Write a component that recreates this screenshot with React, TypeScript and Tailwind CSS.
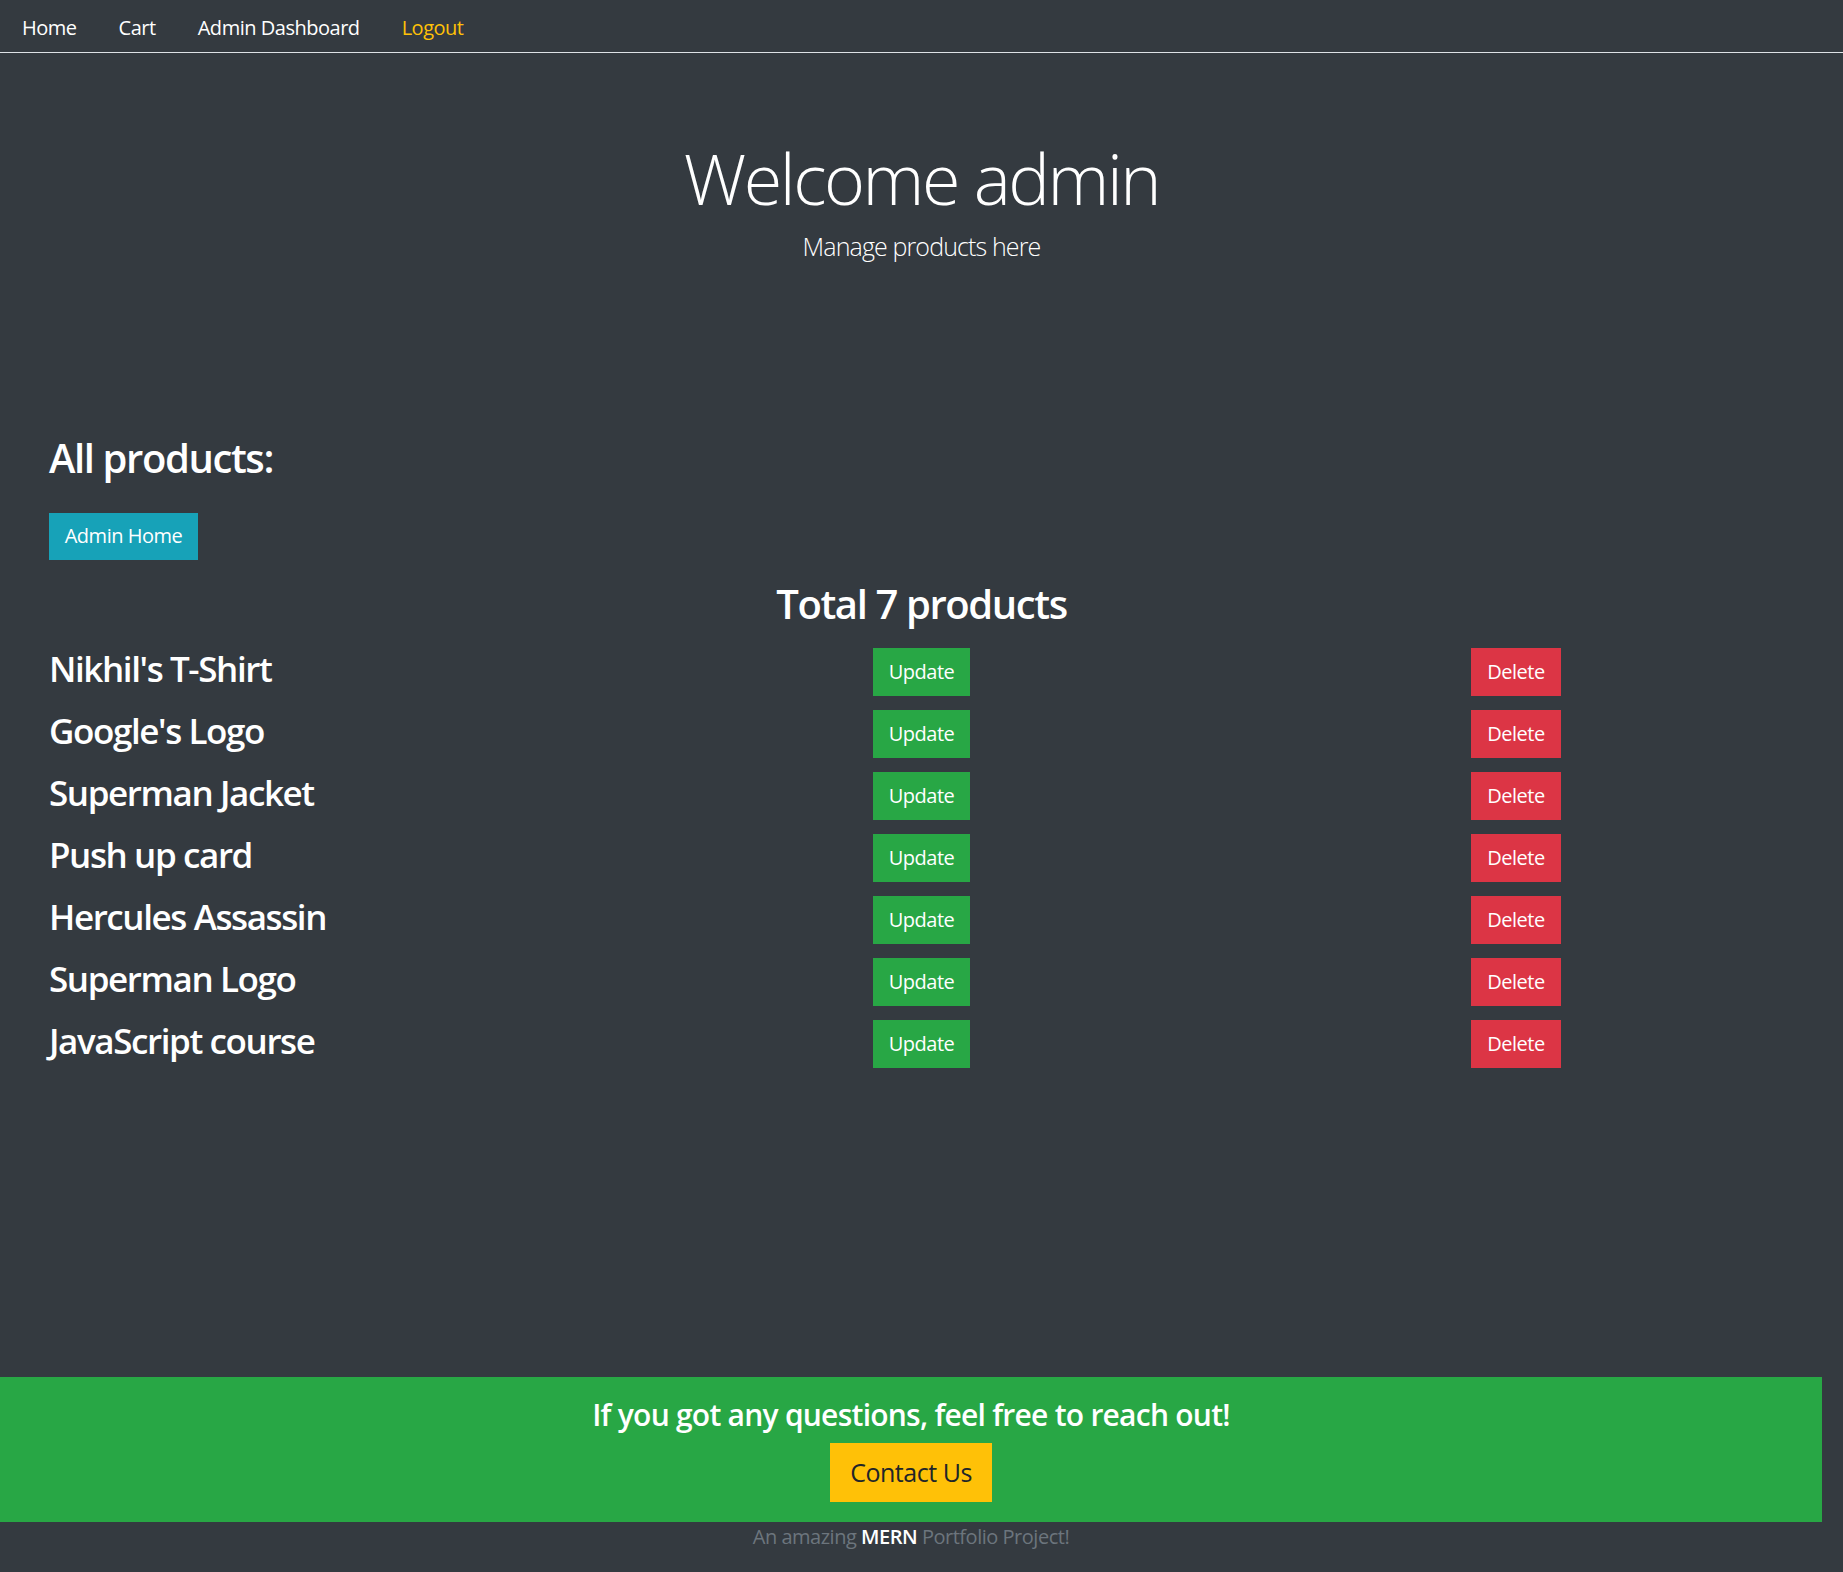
import React from 'react'

const products = [
  "Nikhil's T-Shirt",
  "Google's Logo",
  'Superman Jacket',
  'Push up card',
  'Hercules Assassin',
  'Superman Logo',
  'JavaScript course',
]

export default function App() {
  return (
    <div className="min-h-screen flex flex-col bg-[#343a40] text-white font-['Open_Sans',sans-serif] tracking-[-0.03em]">
      {/* nav */}
      <nav className="h-[53px] pt-[3px] flex items-center gap-[42px] pl-[22px] border-b border-[#dee2e6] text-[20px]">
        <a className="text-white">Home</a>
        <a className="text-white">Cart</a>
        <a className="text-white">Admin Dashboard</a>
        <a className="text-[#ffc107]">Logout</a>
      </nav>

      {/* hero */}
      <header className="text-center pt-[83px]">
        <h1 className="text-[70px] leading-[1.2] font-light tracking-[-0.035em]">Welcome admin</h1>
        <p className="mt-[8px] text-[25px] leading-[1.5] font-light tracking-[-0.035em]">Manage products here</p>
      </header>

      {/* products */}
      <main className="px-[49px] pt-[168px]">
        <h2 className="text-[40px] leading-[1.2] font-semibold tracking-[-0.035em]">All products:</h2>
        <button className="mt-[31px] w-[149px] h-[47px] bg-[#17a2b8] text-[20px] text-white">Admin Home</button>
        <h2 className="mt-[20px] text-center text-[40px] leading-[1.2] font-semibold tracking-[-0.035em]">
          Total {products.length} products
        </h2>
        <div className="mt-[20px] flex flex-col gap-[14px]">
          {products.map((p) => (
            <div key={p} className="grid grid-cols-[824px_97px_501px_90px] items-center h-[48px]">
              <h3 className="mb-[6px] text-[35px] leading-[1.2] font-semibold tracking-[-0.04em]">{p}</h3>
              <button className="h-[48px] bg-[#28a745] text-[20px] text-white">Update</button>
              <span />
              <button className="h-[48px] bg-[#dc3545] text-[20px] text-white">Delete</button>
            </div>
          ))}
        </div>
      </main>

      {/* footer */}
      <footer className="mt-auto">
        <div className="mr-[21px] bg-[#28a745] pt-[20px] pb-[20px] flex flex-col items-center">
          <h4 className="text-[30px] leading-[1.2] font-semibold tracking-[-0.025em]">
            If you got any questions, feel free to reach out!
          </h4>
          <button className="mt-[10px] w-[162px] h-[59px] bg-[#ffc107] text-[25px] text-[#212529]">Contact Us</button>
        </div>
        <p className="mr-[21px] h-[50px] text-center text-[20px] leading-[1.5] text-[#6c757d]">
          An amazing <span className="text-white font-semibold">MERN</span> Portfolio Project!
        </p>
      </footer>
    </div>
  )
}
